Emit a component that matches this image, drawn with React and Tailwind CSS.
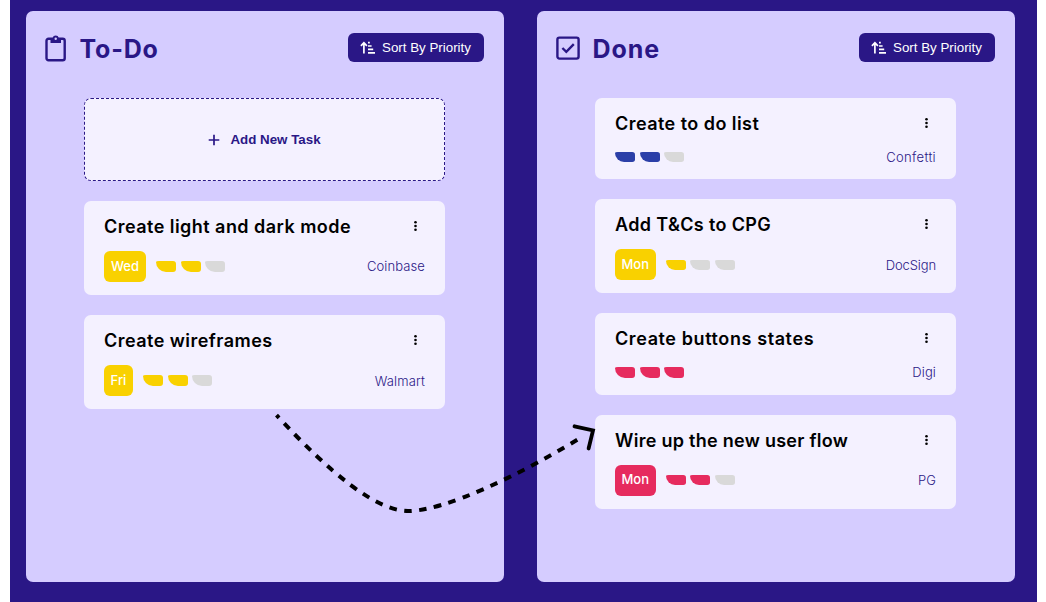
import React from "react";

const TONES = {
  yellow: "bg-[#f9d100]",
  blue: "bg-[#2b3fa8]",
  red: "bg-[#e62b5e]",
};

const todo = [
  { title: "Create light and dark mode", track: "tracking-[0.46px]", day: "Wed", dayWidth: "w-[42px]", tone: "yellow", level: 2, client: "Coinbase", clientTrack: "tracking-[0.1px]" },
  { title: "Create wireframes", track: "tracking-[0.46px]", day: "Fri", dayWidth: "w-[29px]", tone: "yellow", level: 2, client: "Walmart", clientTrack: "tracking-[0.15px]" },
];

const done = [
  { title: "Create to do list", track: "tracking-[0.45px]", tone: "blue", level: 2, client: "Confetti", clientTrack: "tracking-[0.35px]" },
  { title: "Add T&Cs to CPG", track: "tracking-[0.36px]", day: "Mon", dayWidth: "w-[40.5px]", tone: "yellow", level: 1, client: "DocSign", clientTrack: "tracking-[-0.1px]" },
  { title: "Create buttons states", track: "tracking-[0.6px]", tone: "red", level: 3, client: "Digi", clientTrack: "tracking-[0.1px]" },
  { title: "Wire up the new user flow", track: "tracking-[0.28px]", day: "Mon", dayWidth: "w-[40.5px]", tone: "red", level: 2, client: "PG", clientTrack: "tracking-[0.1px]" },
];

function ClipboardIcon() {
  return (
    <svg className="h-[28px] w-[22px] shrink-0" viewBox="0 0 22 28" fill="none">
      <rect x="1.5" y="4.8" width="18.2" height="21.4" rx="2" stroke="#2a1786" strokeWidth="2.4" />
      <path d="M5.5 9V5.6Q5.5 4 7 4H7.6a3.2 3.2 0 0 1 6.2 0h.6Q16 4 16 5.6V9Z" fill="#2a1786" />
      <circle cx="10.7" cy="4.7" r="1.2" fill="#d5ccff" />
    </svg>
  );
}

function CheckIcon() {
  return (
    <svg className="h-[24px] w-[24px] shrink-0" viewBox="0 0 24 24" fill="none" stroke="#2a1786" strokeWidth="2.4">
      <rect x="1.4" y="1.6" width="21.2" height="21" rx="2" />
      <path d="M6.4 12L10.3 15.8L17.8 8.2" />
    </svg>
  );
}

function SortIcon() {
  return (
    <svg className="h-[13px] w-[15px] shrink-0" viewBox="0 0 15 13" fill="none" stroke="#fff" strokeWidth="1.7">
      <path d="M3.9 12.6V2M0.9 4.8L3.9 1.8L6.9 4.8" />
      <path d="M8 1.6H9.8M8 5H11.6M8 8.4H13.2M8 11.8H15" />
    </svg>
  );
}

function Column({ icon, title, titleTrack, children }) {
  return (
    <section className="h-[570.5px] w-[478px] shrink-0 rounded-[7px] bg-[#d5ccff]">
      <header className="flex h-[74px] items-center pl-[19px] pr-[20px]">
        {icon}
        <h2 className={"ml-[13px] mt-px text-[25px] font-bold leading-[32px] text-[#2a1786] " + titleTrack}>{title}</h2>
        <button className="-mt-px ml-auto flex h-[29px] w-[136px] items-center justify-center gap-[7px] rounded-[6px] bg-[#2a1786] font-['Liberation_Sans',sans-serif] text-[13.33px] text-white">
          <SortIcon />
          <span className="whitespace-nowrap">Sort By Priority</span>
        </button>
      </header>
      <div className="ml-[58.5px] mt-[13px] flex w-[361px] flex-col gap-[19.9px]">{children}</div>
    </section>
  );
}

function Task({ task }) {
  return (
    <article className={"flex flex-col rounded-[7px] bg-[#f4f1ff] pl-[20px] pr-[20px] " + (task.day ? "h-[94.3px]" : "h-[81.3px]")}>
      <div className="mt-[13px] flex h-[25px] items-center justify-between pr-[7.5px]">
        <h3 className={"whitespace-nowrap text-[18px] font-semibold leading-[25px] text-black " + task.track}>{task.title}</h3>
        <svg className="mb-px h-[12px] w-[5px]" viewBox="0 0 5 12">
          <circle cx="2.5" cy="2.2" r="1.3" />
          <circle cx="2.5" cy="6" r="1.3" />
          <circle cx="2.5" cy="9.8" r="1.3" />
        </svg>
      </div>
      <div className={"flex items-center " + (task.day ? "mt-[12px] h-[31px]" : "mt-[10px] h-[22px]")}>
        {task.day && (
          <span className={"mr-[10px] flex h-[31px] items-center justify-center rounded-[6px] text-[13px] font-medium text-white " + task.dayWidth + " " + TONES[task.tone]}>
            {task.day}
          </span>
        )}
        <div className="flex gap-[4.7px]">
          {[0, 1, 2].map((i) => (
            <span key={i} className={"h-[10.3px] w-[20px] rounded-[3px_3px_3px_10px/1px_3px_3px_10px] " + (i < task.level ? TONES[task.tone] : "bg-[#d9d9d9]")} />
          ))}
        </div>
        <span className={"ml-auto text-[13px] font-light leading-[20px] text-[#2a1786] " + task.clientTrack}>{task.client}</span>
      </div>
    </article>
  );
}

export default function App() {
  return (
    <div className="relative h-[602px] w-[1046px] overflow-hidden bg-white pl-[9.5px] font-['Inter',sans-serif]">
      <main className="flex h-[602px] w-[1027px] gap-[33px] bg-[#2a1786] pl-[16px] pt-[11px]">
        <Column icon={<ClipboardIcon />} title="To-Do" titleTrack="tracking-[0.8px]">
          <button className="flex h-[83px] items-center justify-center gap-[10px] rounded-[7px] border border-dashed border-[#2a1786] bg-[#f4f1ff] font-['Liberation_Sans',sans-serif] text-[13.33px] font-bold text-[#2a1786]">
            <svg className="h-[12px] w-[12px]" viewBox="0 0 12 12" stroke="currentColor" strokeWidth="1.7">
              <path d="M6 0.7V11.3M0.7 6H11.3" />
            </svg>
            <span className="whitespace-nowrap">Add New Task</span>
          </button>
          {todo.map((t) => <Task key={t.title} task={t} />)}
        </Column>
        <Column icon={<CheckIcon />} title="Done" titleTrack="tracking-[0.9px]">
          {done.map((t) => <Task key={t.title} task={t} />)}
        </Column>
      </main>
      <svg className="pointer-events-none absolute left-0 top-0 h-[602px] w-[1046px]" viewBox="0 0 1046 602" fill="none" stroke="#000" strokeWidth="4">
        <path d="M276.5 415.2C330 473 376 511 408 511C445 511 520 475 583 436.3" strokeDasharray="7.6 7.5" strokeDashoffset="4" />
        <path d="M574.5 426.3L593 430.4L588.6 448.5" strokeWidth="3.8" strokeLinecap="round" />
      </svg>
    </div>
  );
}
